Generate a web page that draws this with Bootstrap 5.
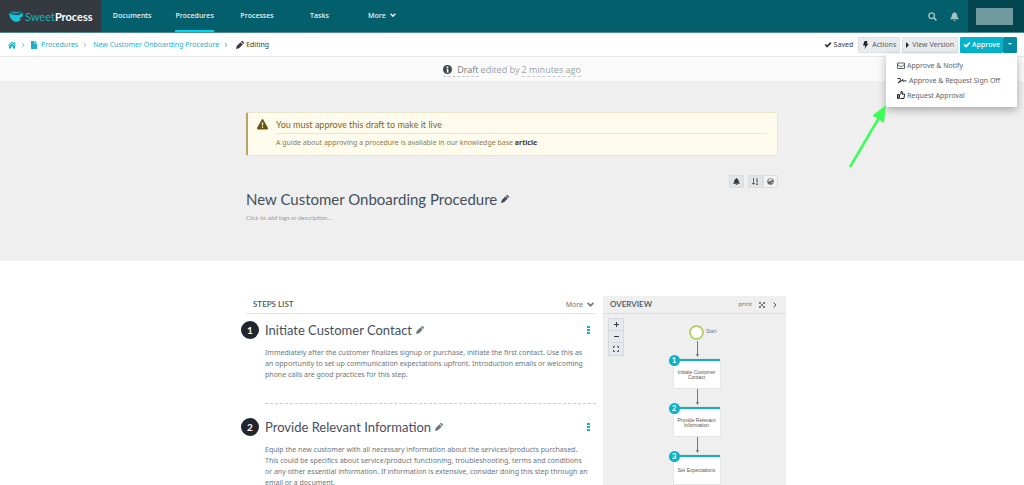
<!DOCTYPE html>
<html lang="en">
<head>
<meta charset="utf-8">
<meta name="viewport" content="width=device-width, initial-scale=1">
<title>SweetProcess - New Customer Onboarding Procedure</title>
<link href="https://cdn.jsdelivr.net/npm/bootstrap@5.3.0/dist/css/bootstrap.min.css" rel="stylesheet">
<style>
body{font-family:"Noto Sans","Open Sans",sans-serif;font-size:7px;line-height:11px;color:#6c757d;background:#fff}
a{text-decoration:none;color:inherit}
svg{display:block;flex:none}
h1,h2,h3,p{margin:0}
button{font-family:inherit}
.topbar{background:#025f6b;height:33px;border-bottom:1px solid #4d8a92}
.brand{width:101px;background:#343a40;color:#fff;font:700 11px/33px Lato,sans-serif;padding-left:9px;gap:2px}
.brand span{color:#18b4c9;font-weight:400}
.mainnav{width:312px}
.mainnav a{font:600 7px/31px "Open Sans",sans-serif;color:#e3eff0;border-bottom:2px solid transparent}
.mainnav a.active{border-color:#00d5ee}
.toptools{color:#a3c1c5}
.toptools a{margin-right:13px}
.toptools a+a{margin-right:9px}
.userbox{background:#034650;width:56px;padding-left:8px}
.userbox div{width:37px;height:17px;background:#719a9e}
.crumbs{height:24px;border-bottom:1px solid #e8e8e8;color:#1fafc4;padding:0 7px 0 8px}
.crumbs .path{gap:6px}
.crumbs .path>*{white-space:nowrap}
.crumbs .here,.saved{color:#343a40;gap:2px}
.crumbs .here{margin-left:2px}
.saved{margin-right:3px}
.toolset{gap:2px}
.tool{border:1px solid #dde1e5;background:#e9ecef;border-radius:1px;height:16px;font-size:7px;line-height:14px;padding:0 3px;color:#565e66;display:flex;align-items:center;justify-content:center;gap:3px;white-space:nowrap}
.tool.go{background:#06b3cd;border-color:#06b3cd;color:#fff;font-weight:500;padding:0 2px;gap:1px}
.tool.caret{background:#078ca1;border-color:#078ca1;color:#fff;min-width:14px;padding:0}
.dropdown-menu.approve-menu{position:absolute;right:0;left:auto;top:17px;width:131px;min-width:0;border:0;border-radius:1px;padding:4px 0;background:#fff;box-shadow:0 3px 9px rgba(0,0,0,.3)}
.approve-menu .dropdown-item{padding:0 0 0 11px;font-size:7px;line-height:15px;height:15px;color:#5b646c;display:flex;align-items:center;gap:2px}
.pointer{position:absolute;right:136px;top:50px;z-index:1001}
.draftbar{background:#fafafa;height:24px;font:9px/13px "Open Sans",sans-serif;color:#9a9fa4;gap:2px}
.draftbar a{border-bottom:1px dashed #c8cacc;margin-top:1px}
.draftbar .state{gap:5px;color:#737a80}
.hero{background:#efefef;height:180px;padding-top:31px}
.colmain{max-width:532px;width:100%;margin:0 auto}
.note{height:44px;background:#fffbed;border:1px solid #ebe4c8;border-left:2px solid #b9a465;border-radius:2px;padding:5px 10px 0 9px;color:#8a7c4e}
.note h2{font:400 9px/13px Lato,sans-serif;color:#7a6828;border-bottom:1px solid #ebe5cf;padding-bottom:2px}
.note p{line-height:18px}
.note a{font-weight:700;color:#453c1b}
.minibar{padding-top:19px}
.mini{border:1px solid #d9dde0;background:#e2e5e7;height:13px;width:15px;padding:0;display:flex;align-items:center;justify-content:center;border-radius:1px;color:#343a40}
.mini.pale{background:#f0f1f2}
.ptitle{font:400 15px/22px Lato,sans-serif;color:#454f5b}
.tags{font:6px/12px Lato,sans-serif;color:#979ca1;padding-top:2px}
.lower{max-width:548px;width:100%;margin:0 auto;padding-top:35px}
.steps{padding-left:3px;margin-right:7px}
.steps article{padding-top:7px}
.steps article+article{padding-top:14px}
.listhead{height:18px;margin-left:5px;padding:0 2px 0 7px;border-bottom:1px solid #e3e5e7}
.listhead h2,.overview h2{font:600 8px/17px Lato,sans-serif;color:#4a535c}
.num{width:18px;height:18px;border-radius:50%;background:#20262c;color:#fff;font:700 10px/18px Lato,sans-serif;text-align:center;flex:none;margin-right:6px}
.stitle{font:400 13px/18px Lato,sans-serif;color:#454f5b}
.stepbody{margin:8px 0 0 24px;white-space:nowrap}
.rule{margin:23px 0 0 24px;border-top:1px dashed #ccc}
.dots{border:0;background:none;padding:0 3px;color:#20aec6;margin-right:3px}
.overview{width:183px;flex:none;background:#efefef;border-radius:2px;height:300px}
.overview header{height:18px;border-bottom:1px solid #dcdee0;padding:0 8px 0 7px;gap:7px}
.overview header a{font-size:6px}
.zoomer{position:absolute;left:5px;top:4px;border:1px solid #d4dae0;width:16px;background:#e6eaee}
.zoomer button{display:flex;align-items:center;justify-content:center;border:0;border-bottom:1px solid #d4dae0;background:none;width:14px;height:12px;padding:0;color:#343a40}
.zoomer button:last-child{border:0}
.flow{padding:11px 0 0 4px}
.startdot{width:15px;height:15px;border:2px solid #b7d26c;border-radius:50%;background:#fff}
.startdot span{position:absolute;left:15px;top:-2px;font:5px/12px "Liberation Sans",sans-serif}
.fnode{width:46px;height:29px;background:#fff;border-top:2px solid #0bb0c9;box-shadow:0 0 1px #bbb;font:5px/5px "Liberation Sans",sans-serif;color:#555;text-align:center}
.fnode b{position:absolute;left:-5px;top:-6px;width:11px;height:11px;border-radius:50%;background:#0bb0c9;color:#fff;font:700 8px/11px Lato,sans-serif}
</style>
</head>
<body class="vh-100 overflow-hidden d-flex flex-column">
<svg class="d-none" aria-hidden="true">
  <symbol id="pen" viewBox="0 0 16 16"><path fill="currentColor" d="M0 16l1.500-6L9 2.500 13.500 7 6 14.500zM10 1.500L11.500 0q1-.5 2 .5L15.500 2.500q1 1 .2 2L14.500 6z"/></symbol>
  <symbol id="check" viewBox="0 0 16 16"><path fill="none" stroke="currentColor" stroke-width="4" d="M1.500 8l4.500 4.500L14.500 3.500"/></symbol>
  <symbol id="bell" viewBox="0 0 16 16"><path fill="currentColor" d="M8 0q1.200 0 1.200 1.500Q13 2.500 13 7q0 3 2.500 5v1H.5v-1Q3 10 3 7q0-4.500 3.800-5.500Q6.800 0 8 0zM5.800 14h4.400Q10 16 8 16t-2.200-2z"/></symbol>
  <symbol id="down" viewBox="0 0 16 16"><path fill="none" stroke="currentColor" stroke-width="4" d="M1.500 4.500L8 11l6.500-6.500"/></symbol>
  <symbol id="dots" viewBox="0 0 3 9"><path fill="currentColor" d="M0 0h3v2H0zM0 3h3v2H0zM0 6h3v2H0z"/></symbol>
  <symbol id="arrow" viewBox="0 0 8 19"><path fill="none" stroke="#777" d="M4.500 1v14"/><path fill="#666" d="M3 14h3l-1.500 3z"/></symbol>
</svg>

<nav class="topbar d-flex flex-shrink-0">
  <a href="#" class="brand d-flex align-items-center">
    <svg width="14" height="11" viewBox="0 0 14 11"><path fill="#16c5dd" d="M0 2q3 2 7 2t7-2q0 8-7 9Q1 10 0 2z"/><path fill="#0b8fa3" d="M1 1.500Q4-.5 7 .8 10-.3 13 1.500 10 3 7 3T1 1.500z"/><path fill="#343a40" d="M8 2.500l3-1-2 3zM10 8q2-1 3-3v3z"/></svg>
    <div><span>Sweet</span>Process</div>
  </a>
  <div class="mainnav d-flex">
    <div class="col d-flex justify-content-center"><a href="#">Documents</a></div>
    <div class="col d-flex justify-content-center"><a href="#" class="active" aria-current="page">Procedures</a></div>
    <div class="col d-flex justify-content-center"><a href="#">Processes</a></div>
    <div class="col d-flex justify-content-center"><a href="#">Tasks</a></div>
    <div class="col d-flex justify-content-center"><a href="#" class="d-flex align-items-center gap-1">More <svg width="6" height="6"><use href="#down"/></svg></a></div>
  </div>
  <div class="toptools ms-auto d-flex align-items-center">
    <a href="#" aria-label="Search"><svg width="9" height="9" viewBox="0 0 16 16"><g fill="none" stroke="currentColor"><circle cx="6.500" cy="6.500" r="5" stroke-width="2.500"/><path stroke-width="3" d="M10.500 10.500L15 15"/></g></svg></a>
    <a href="#" aria-label="Notifications"><svg width="9" height="9"><use href="#bell"/></svg></a>
    <div class="userbox h-100 d-flex align-items-center"><div></div></div>
  </div>
</nav>

<div class="crumbs d-flex align-items-center justify-content-between flex-shrink-0 position-relative">
  <div class="path d-flex align-items-center">
    <a href="#" aria-label="Home"><svg width="8" height="8" viewBox="0 0 16 16"><path fill="currentColor" d="M8 1l8 7-1 1.300L8 3.500 1 9.300 0 8zM12 2h2v4l-2-2zM8 5l6 5v5h-4.500v-4h-3v4H2v-5z"/></svg></a>
    <svg width="3" height="6" viewBox="0 0 3 6"><path fill="none" stroke="#8fcbd6" d="M0 1l2 2-2 2"/></svg>
    <a href="#" class="d-flex align-items-center gap-1"><svg width="6" height="8" viewBox="0 0 12 16"><path fill="currentColor" d="M0 0h7v5h5v11H0zM8 0l4 4H8z"/></svg>Procedures</a>
    <svg width="3" height="6" viewBox="0 0 3 6"><path fill="none" stroke="#8fcbd6" d="M0 1l2 2-2 2"/></svg>
    <a href="#">New Customer Onboarding Procedure</a>
    <svg width="3" height="6" viewBox="0 0 3 6"><path fill="none" stroke="#5bbccb" d="M0 1l2 2-2 2"/></svg>
    <span class="here d-flex align-items-center"><svg width="8" height="8"><use href="#pen"/></svg>Editing</span>
  </div>
  <div class="toolset d-flex align-items-center">
    <span class="saved d-flex align-items-center"><svg width="8" height="7"><use href="#check"/></svg>Saved</span>
    <button class="tool" type="button"><svg width="7" height="8" viewBox="0 0 14 16"><path fill="#222" d="M5 0h6L9 5h4L5 16l1.500-7H2z"/></svg>Actions</button>
    <button class="tool" type="button"><svg width="3" height="6" viewBox="0 0 3 6"><path fill="#222" d="M0 0l3 3-3 3z"/></svg>View Version</button>
    <div class="dropdown d-flex">
      <button class="tool go" type="button"><svg width="8" height="7"><use href="#check"/></svg>Approve</button>
      <button class="tool caret" type="button" aria-label="Approve options" aria-expanded="true"><svg width="4" height="3" viewBox="0 0 4 3"><path fill="#fff" d="M0 0h4L2 2z"/></svg></button>
      <div class="dropdown-menu approve-menu show">
        <a class="dropdown-item" href="#"><svg width="8" height="7" viewBox="0 0 16 14"><path fill="none" stroke="currentColor" stroke-width="2" d="M1 2h14v11H1zM1 5l7 5 7-5"/></svg>Approve &amp; Notify</a>
        <a class="dropdown-item" href="#"><svg width="10" height="7" viewBox="0 0 20 14"><path fill="none" stroke="#222" stroke-width="2" d="M1 3h5q3 3-1 6l-3 3q6-3 10-7-2 5 2 3 3-1 5 0"/></svg>Approve &amp; Request Sign Off</a>
        <a class="dropdown-item" href="#"><svg width="8" height="8" viewBox="0 0 16 16"><path fill="none" stroke="#222" stroke-width="2" d="M1 7h3v8H1zM5 8l3-3V1q3-1 3 3l-1 2h5l-1 9H7l-2-1z"/></svg>Request Approval</a>
      </div>
    </div>
  </div>
  <svg class="pointer" width="41" height="86" viewBox="0 0 41 86"><path stroke="#3bff57" stroke-width="2.500" d="M3 84L33 33"/><path fill="#3bff57" d="M39 22L25.500 32.500 37 40z"/></svg>
</div>

<div class="draftbar d-flex align-items-center justify-content-center flex-shrink-0">
  <a href="#" class="state d-flex align-items-center"><svg width="9" height="9" viewBox="0 0 16 16"><circle cx="8" cy="8" r="8" fill="#3d454d"/><path fill="#fff" d="M6.500 2.500h3v3h-3zM6 6.500h3.500V12h1v1.500H6V12h1V8H6z"/></svg>Draft</a>
  <span>edited by</span><a href="#">2 minutes ago</a>
</div>

<section class="hero flex-shrink-0">
  <div class="colmain">
    <div class="note d-flex" role="alert">
      <svg class="me-2" width="11" height="12" viewBox="0 0 22 24"><path fill="#6b5310" d="M11 2q1 0 2 2l9 16q0 3-2 3H2q-2 0-2-3L9 4q1-2 2-2z"/><path fill="#fff" d="M9.500 9h3l-.5 6h-2zM9.700 17h2.600v2.600H9.700z"/></svg>
      <div class="flex-grow-1">
        <h2>You must approve this draft to make it live</h2>
        <p>A guide about approving a procedure is available in our knowledge base <a href="#">article</a></p>
      </div>
    </div>
    <div class="minibar d-flex justify-content-end">
      <button class="mini me-1" type="button" aria-label="Notify"><svg width="7" height="7"><use href="#bell"/></svg></button>
      <button class="mini" type="button" aria-label="Numbered view"><svg width="7" height="7" viewBox="0 0 14 14"><path fill="none" stroke="#666" stroke-width="2" d="M3 0v12M0 10l3 3 3-3M10 0v6M10 8v6M8 6h4M8 13h4"/></svg></button>
      <button class="mini pale" type="button" aria-label="Public"><svg width="7" height="7" viewBox="0 0 14 14"><circle cx="7" cy="7" r="6.500" fill="#666"/><path fill="#eee" d="M7 1l4 2-3 3-2-1-1 2-3-1q1-4 5-5zM9 8l3 0-2 4z"/></svg></button>
    </div>
    <h1 class="ptitle d-flex align-items-center gap-1">New Customer Onboarding Procedure<svg width="8" height="8"><use href="#pen"/></svg></h1>
    <div class="tags">Click to add tags or description...</div>
  </div>
</section>

<main class="lower d-flex align-items-start">
  <section class="steps flex-grow-1">
    <div class="listhead d-flex justify-content-between align-items-center"><h2>STEPS LIST</h2><a href="#" class="d-flex align-items-center gap-1">More <svg width="7" height="7"><use href="#down"/></svg></a></div>
    <article>
      <div class="d-flex align-items-center"><span class="num">1</span><h3 class="stitle">Initiate Customer Contact</h3><svg class="ms-1" width="8" height="8"><use href="#pen"/></svg><button class="dots ms-auto" type="button" aria-label="Step 1 menu"><svg width="3" height="9"><use href="#dots"/></svg></button></div>
      <p class="stepbody">Immediately after the customer finalizes signup or purchase, initiate the first contact. Use this as<br>an opportunity to set up communication expectations upfront. Introduction emails or welcoming<br>phone calls are good practices for this step.</p>
      <div class="rule"></div>
    </article>
    <article>
      <div class="d-flex align-items-center"><span class="num">2</span><h3 class="stitle">Provide Relevant Information</h3><svg class="ms-1" width="8" height="8"><use href="#pen"/></svg><button class="dots ms-auto" type="button" aria-label="Step 2 menu"><svg width="3" height="9"><use href="#dots"/></svg></button></div>
      <p class="stepbody">Equip the new customer with all necessary information about the services/products purchased.<br>This could be specifics about service/product functioning, troubleshooting, terms and conditions<br>or any other essential information. If information is extensive, consider doing this step through an<br>email or a document.</p>
    </article>
  </section>
  <aside class="overview">
    <header class="d-flex align-items-center"><h2 class="me-auto">OVERVIEW</h2><a href="#">print</a>
      <svg width="6" height="6" viewBox="0 0 12 12"><path fill="none" stroke="#555" stroke-width="1.500" d="M1 4V1h3M8 1h3v3M11 8v3H8M4 11H1V8M1 1l10 10M11 1L1 11"/></svg>
      <svg width="6" height="6" viewBox="0 0 12 12"><path fill="none" stroke="#555" stroke-width="2" d="M3 1l5 5-5 5"/></svg></header>
    <div class="position-relative">
      <div class="zoomer">
        <button type="button" aria-label="Zoom in"><svg width="5" height="5" viewBox="0 0 5 5"><path fill="currentColor" d="M2 0h1v2h2v1H3v2H2V3H0V2h2z"/></svg></button>
        <button type="button" aria-label="Zoom out"><svg width="5" height="5" viewBox="0 0 5 5"><path fill="currentColor" d="M0 2h5v1H0z"/></svg></button>
        <button type="button" aria-label="Fit"><svg width="6" height="6" viewBox="0 0 12 12"><path fill="none" stroke="#555" stroke-width="2" d="M1 4V1h3M8 1h3v3M11 8v3H8M4 11H1V8"/></svg></button>
      </div>
      <div class="flow d-flex flex-column align-items-center">
        <div class="startdot position-relative"><span>Start</span></div>
        <svg width="8" height="19"><use href="#arrow"/></svg>
        <div class="fnode position-relative d-flex align-items-center justify-content-center"><b>1</b><span>Initiate Customer<br>Contact</span></div>
        <svg width="8" height="19"><use href="#arrow"/></svg>
        <div class="fnode position-relative d-flex align-items-center justify-content-center"><b>2</b><span>Provide Relevant<br>Information</span></div>
        <svg width="8" height="19"><use href="#arrow"/></svg>
        <div class="fnode position-relative d-flex align-items-center justify-content-center"><b>3</b><span>Set Expectations</span></div>
        <svg width="8" height="19"><use href="#arrow"/></svg>
      </div>
    </div>
  </aside>
</main>
<script src="https://cdn.jsdelivr.net/npm/bootstrap@5.3.0/dist/js/bootstrap.bundle.min.js"></script>
</body>
</html>
